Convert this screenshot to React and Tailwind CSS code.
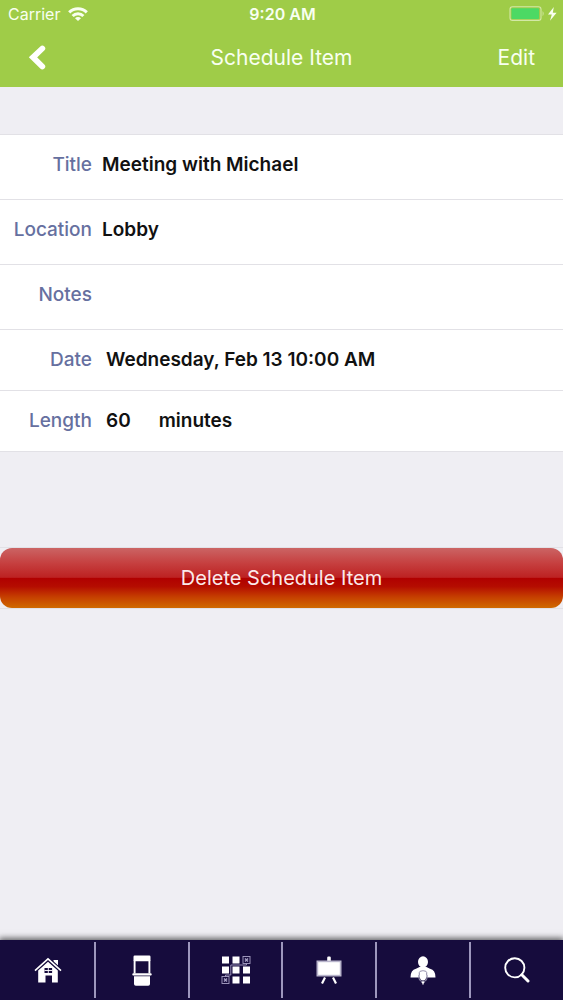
const fields = [
    { label: 'Title', value: 'Meeting with Michael' },
    { label: 'Location', value: 'Lobby' },
    { label: 'Notes', value: '' },
];

const WifiIcon = () => (
    <svg viewBox="0 0 20 14" className="w-5 h-3.5" aria-hidden="true">
        <g fill="none" stroke="#f8fff0" strokeWidth="3">
            <path d="M1.2 5.4 A12.4 12.4 0 0 1 18.8 5.4" />
            <path d="M4.6 9 A7.6 7.6 0 0 1 15.4 9" />
        </g>
        <path d="M10 14 L7 11.3 A4.2 4.2 0 0 1 13 11.3 Z" fill="#f8fff0" />
    </svg>
);

const BatteryIcon = () => (
    <svg viewBox="0 0 48 16" className="w-12 h-4" aria-hidden="true">
        <rect x="1" y="0.8" width="31" height="13.6" rx="2.5" fill="none" stroke="#d3e8a6" strokeWidth="1.1" />
        <rect x="2.5" y="2.2" width="27.5" height="10.8" rx="1" fill="#4cd964" />
        <path d="M33.6 5 Q35.6 7.6 33.6 10.2 Z" fill="#d3e8a6" />
        <path d="M44.8 1 L39 8.6 H42.8 L41 14.8 L47.6 6.8 H43.8 Z" fill="#f8fff0" />
    </svg>
);

const HomeIcon = () => (
    <svg viewBox="0 0 28 26" className="w-7 h-6.5" aria-hidden="true">
        <path d="M19.5 3 H24 V10 L19.5 6.3 Z" fill="#fff" />
        <path d="M4.2 13.5 L14 4.8 L23.8 13.5 V25.5 H18 V18.5 H11.5 V25.5 H4.2 Z" fill="#fff" />
        <path d="M1 13.5 L14 1.6 L27 13.5" fill="none" stroke="#160c3d" strokeWidth="3.4" />
        <path d="M1 13.6 L14 1.8 L27 13.6" fill="none" stroke="#fff" strokeWidth="1.6" />
        <rect x="10.5" y="11" width="7.6" height="5" fill="#160c3d" />
        <path d="M14.3 11 V16 M10.5 13.5 H18.1" stroke="#fff" strokeWidth="0.9" />
    </svg>
);

const BoothIcon = () => (
    <svg viewBox="0 0 20 31" className="w-5 h-[31px]" aria-hidden="true">
        <rect x="1.5" y="0.5" width="17" height="5.8" rx="1.2" fill="#fff" />
        <path d="M2.6 5 V18.5 M17.4 5 V18.5" stroke="#fff" strokeWidth="1.9" />
        <rect x="0.3" y="18.2" width="19.4" height="2.2" rx="1" fill="#fff" />
        <path d="M2 21.3 H18 V29 Q18 30.8 16.2 30.8 H3.8 Q2 30.8 2 29 Z" fill="#fff" />
    </svg>
);

const GridIcon = () => (
    <svg viewBox="0 0 30 30" className="w-7.5 h-7.5" aria-hidden="true">
        <g fill="#fff">
            <rect x="1" y="1.5" width="7" height="7" />
            <rect x="11.5" y="1.5" width="7" height="7" />
            <rect x="1" y="11.5" width="7" height="7" />
            <rect x="11.5" y="11.5" width="7" height="7" />
            <rect x="22" y="11.5" width="7" height="7" />
            <rect x="11.5" y="21.5" width="7" height="7" />
            <rect x="22" y="21.5" width="7" height="7" />
        </g>
        <g fill="none" stroke="#a8a2c6" strokeWidth="0.9">
            <rect x="22" y="1.5" width="7" height="7" />
            <rect x="1" y="21.5" width="7" height="7" />
            <path d="M4.5 21.5 V20 H9.8 V10 H25.5 V8.5" />
            <path d="M24 3.5 L27 6.5 M27 3.5 L24 6.5 M3 23.5 L6 26.5 M6 23.5 L3 26.5" strokeWidth="1.4" />
        </g>
    </svg>
);

const EaselIcon = () => (
    <svg viewBox="0 0 26 28" className="w-6.5 h-7" aria-hidden="true">
        <rect x="11.2" y="0.5" width="3.6" height="5" rx="1.2" fill="#fff" />
        <rect x="0.5" y="4.5" width="25" height="16" fill="#b9b5cc" />
        <rect x="2.2" y="6.2" width="21.6" height="12.6" fill="#fff" />
        <path d="M9 21.5 L6 27.5 M17 21.5 L20 27.5" stroke="#fff" strokeWidth="2.2" />
    </svg>
);

const SpeakerIcon = () => (
    <svg viewBox="0 0 26 29" className="w-6.5 h-[29px]" aria-hidden="true">
        <ellipse cx="13" cy="6" rx="5" ry="5.7" fill="#fff" />
        <path d="M0.5 21.5 Q0.5 14 6 12.8 L9.5 11 H16.5 L20 12.8 Q25.5 14 25.5 21.5 Z" fill="#fff" />
        <path d="M9.3 19 V16.5 Q9.3 14.8 13 14.8 Q16.7 14.8 16.7 16.5 V19" fill="none" stroke="#8d88a6" strokeWidth="1" />
        <rect x="10" y="15.6" width="6" height="9" rx="3" fill="#fff" />
        <path d="M9 19 V21.5 A4 4 0 0 0 17 21.5 V19" fill="none" stroke="#8d88a6" strokeWidth="1.2" />
        <path d="M13 25.5 V28.6 M11.6 26.4 H14.4" fill="none" stroke="#fff" strokeWidth="1.4" />
    </svg>
);

const SearchIcon = () => (
    <svg viewBox="0 0 26 26" className="w-6.5 h-6.5" aria-hidden="true">
        <circle cx="10.8" cy="10.8" r="9.6" fill="none" stroke="#fff" strokeWidth="1.9" />
        <path d="M17.8 17.8 L24 24" stroke="#fff" strokeWidth="3" strokeLinecap="round" />
    </svg>
);

const tabs = [
    { label: 'Home', Icon: HomeIcon },
    { label: 'Exhibitors', Icon: BoothIcon },
    { label: 'Floor plan', Icon: GridIcon },
    { label: 'Sessions', Icon: EaselIcon },
    { label: 'Speakers', Icon: SpeakerIcon },
    { label: 'Search', Icon: SearchIcon },
];

const Header = () => (
    <header className="bg-[#9fcc48] text-[#f8fff0]">
        {/* Status bar */}
        <div className="grid grid-cols-3 items-center h-7 pl-2 pr-1.5">
            <div className="flex items-center gap-2 text-base">
                Carrier
                <WifiIcon />
            </div>
            <div className="text-center text-base font-semibold">9:20 AM</div>
            <div className="flex justify-end">
                <BatteryIcon />
            </div>
        </div>

        {/* Navigation bar */}
        <div className="grid grid-cols-[1fr_auto_1fr] items-center h-[59px] px-7">
            <button type="button" aria-label="Back" className="justify-self-start">
                <svg viewBox="0 0 20 26" className="w-5 h-6.5" aria-hidden="true">
                    <path d="M14.3 3.5 L5 12.3 L14.3 21.5" fill="none" stroke="#fff" strokeWidth="5.8" strokeLinecap="round" />
                </svg>
            </button>
            <h1 className="text-[21px]">Schedule Item</h1>
            <button type="button" className="justify-self-end text-[21px]">Edit</button>
        </div>
    </header>
);

const Row = ({ label, children }) => (
    <div className="flex items-center gap-2.5 py-4">
        <dt className="w-[92px] shrink-0 text-right font-medium text-[#66709f]">{label}</dt>
        <dd className="font-semibold text-[#111]">{children}</dd>
    </div>
);

const App = () => {
    return (
        <div className="min-h-screen flex flex-col bg-[#efeef3] font-['Inter','Liberation_Sans',sans-serif]">
            <Header />

            <main className="flex-1 pt-[47px]">
                <dl className="bg-white border-y border-[#e2e1e6] divide-y divide-[#e2e1e6] text-[19px] leading-7">
                    {fields.map(({ label, value }) => (
                        <div key={label} className="h-[65px]">
                            <Row label={label}>{value}</Row>
                        </div>
                    ))}
                    <Row label="Date">
                        <span className="pl-1">Wednesday, Feb 13 10:00 AM</span>
                    </Row>
                    <Row label="Length">
                        <span className="pl-1 pr-7">60</span>
                        <span>minutes</span>
                    </Row>
                </dl>

                {/* Delete */}
                <div className="mt-[95px] border-y border-[#e2e1e6]">
                    <button
                        type="button"
                        className="block w-full h-15 rounded-xl text-xl text-[#fbeaea] bg-[linear-gradient(to_bottom,#cb6464_0%,#c64040_25%,#bd2222_49%,#b00000_50%,#b40c00_64%,#c64000_82%,#d06a00_100%)]"
                    >
                        Delete Schedule Item
                    </button>
                </div>
            </main>

            {/* Tab bar */}
            <nav className="flex h-15 bg-[#160c3d] pl-0.5 py-0.5 shadow-[0_-1px_6px_1px_rgba(0,0,0,0.6)] divide-x-2 divide-[#9d97bd]">
                {tabs.map(({ label, Icon }) => (
                    <a key={label} href="#" aria-label={label} className="flex-1 flex items-center justify-center">
                        <Icon />
                    </a>
                ))}
            </nav>
        </div>
    );
};

export default App;
